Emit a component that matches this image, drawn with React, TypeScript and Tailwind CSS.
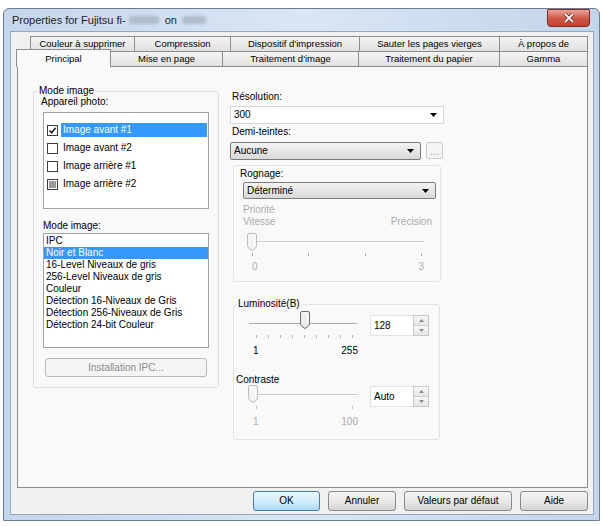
import React from "react";

const rowOne = [
  { label: "Couleur à supprimer", w: "w-[104px]" },
  { label: "Compression", w: "w-[96px]" },
  { label: "Dispositif d'impression", w: "w-[129px]" },
  { label: "Sauter les pages vierges", w: "w-[140px]" },
  { label: "À propos de", w: "w-[89px]" },
];

const rowTwo = [
  { label: "Mise en page", w: "w-[112px]" },
  { label: "Traitement d'image", w: "w-[136px]" },
  { label: "Traitement du papier", w: "w-[141px]" },
  { label: "Gamma", w: "w-[89px]" },
];

const cameras = [
  { label: "Image avant #1", state: "checked", selected: true },
  { label: "Image avant #2", state: "empty", selected: false },
  { label: "Image arrière #1", state: "empty", selected: false },
  { label: "Image arrière #2", state: "gray", selected: false },
];

const modes = [
  "IPC",
  "Noir et Blanc",
  "16-Level Niveaux de gris",
  "256-Level Niveaux de gris",
  "Couleur",
  "Détection 16-Niveaux de Gris",
  "Détection 256-Niveaux de Gris",
  "Détection 24-bit Couleur",
];

function Arrow({ color = "#000" }: { color?: string }) {
  return (
    <svg width="7" height="4" viewBox="0 0 7 4">
      <path d="M0 0H7L3.5 4Z" fill={color} />
    </svg>
  );
}

function Thumb({ disabled = false }: { disabled?: boolean }) {
  return (
    <svg width="10" height="18" viewBox="0 0 10 18">
      <path
        d="M2 0.5H8A1.5 1.5 0 0 1 9.5 2V12.5Q9.5 14 8 15.5L5 17.5L2 15.5Q0.5 14 0.5 12.5V2A1.5 1.5 0 0 1 2 0.5Z"
        fill={disabled ? "#f4f4f4" : "#ededed"}
        stroke={disabled ? "#bcbcbc" : "#6f6f6f"}
      />
      <path d="M2.5 2H7.5V12" fill="none" stroke="#ffffff" />
    </svg>
  );
}

function Checkbox({ state }: { state: string }) {
  return (
    <div className="w-[11px] h-[11px] border border-[#3e3e3e] bg-white flex items-center justify-center shrink-0">
      {state === "checked" && (
        <svg width="9" height="9" viewBox="0 0 9 9">
          <path d="M1.5 4.5L3.7 6.8L7.6 1.8" fill="none" stroke="#222" strokeWidth="1.6" />
        </svg>
      )}
      {state === "gray" && <div className="w-[7px] h-[7px] bg-[#9a9a9a]" />}
    </div>
  );
}

function Ticks({ count, className }: { count: number; className: string }) {
  return (
    <div className={`flex justify-between h-[3px] ${className}`}>
      {Array.from({ length: count }).map((_, i) => (
        <div key={i} className="w-px h-[3px] bg-[#b4b4b4]" />
      ))}
    </div>
  );
}

function Spin({ value }: { value: string }) {
  return (
    <div className="flex h-[21px]">
      <div className="w-[43px] bg-white border border-[#e2e2e2] border-r-0 flex items-center pl-[3px]">
        {value}
      </div>
      <div className="w-[16px] flex flex-col border border-[#c9c9c9]">
        <div className="flex-1 flex items-center justify-center bg-gradient-to-b from-[#f7f7f7] to-[#e6e6e6] border-b border-[#d0d0d0]">
          <svg width="5" height="3" viewBox="0 0 5 3">
            <path d="M0 3H5L2.5 0Z" fill="#8a8a8a" />
          </svg>
        </div>
        <div className="flex-1 flex items-center justify-center bg-gradient-to-b from-[#f7f7f7] to-[#e6e6e6]">
          <svg width="5" height="3" viewBox="0 0 5 3">
            <path d="M0 0H5L2.5 3Z" fill="#8a8a8a" />
          </svg>
        </div>
      </div>
    </div>
  );
}

function Button({ label, w, primary = false }: { label: string; w: string; primary?: boolean }) {
  return (
    <div
      className={`${w} h-[20px] rounded-[3px] border flex items-center justify-center ${
        primary
          ? "border-[#3c7fb1] bg-gradient-to-b from-[#eaf6fd] via-[#d4eefc] to-[#a9daf6]"
          : "border-[#8a8a8a] bg-gradient-to-b from-[#f4f4f4] via-[#e9e9e9] to-[#d3d3d3]"
      }`}
    >
      {label}
    </div>
  );
}

export default function App() {
  return (
    <div className="w-[603px] h-[526px] bg-white overflow-hidden pt-[8px] pl-[3px] font-['Liberation_Sans',Arial,sans-serif] text-[10px] leading-[12px] text-black">
      <div className="w-[597px] h-[513px] rounded-t-[6px] border border-[#6c7e93] bg-gradient-to-r from-[#c4d6ec] via-[#dae6f4] to-[#c2d5eb] flex flex-col">
        {/* title bar */}
        <div className="h-[22px] flex shrink-0">
          <div className="flex items-center pl-[8px] text-[11px] text-[#1e1e1e]">
            <span>Properties for Fujitsu fi-</span>
            <span className="w-[30px] h-[8px] ml-[3px] bg-[#aebccb] rounded-[3px] blur-[1.5px]" />
            <span className="ml-[6px]">on</span>
            <span className="w-[24px] h-[8px] ml-[5px] bg-[#aebccb] rounded-[3px] blur-[1.5px]" />
          </div>
          <div className="ml-auto mr-[9px] w-[43px] h-[18px] rounded-b-[4px] rounded-t-[1px] border border-[#7a2c22] bg-gradient-to-b from-[#e9a597] via-[#cf5b48] to-[#c0412d] flex items-center justify-center">
            <svg width="12" height="10" viewBox="0 0 12 10">
              <path d="M2 1L10 9M10 1L2 9" stroke="#5e1d14" strokeWidth="3.2" />
              <path d="M2 1L10 9M10 1L2 9" stroke="#ffffff" strokeWidth="1.8" />
            </svg>
          </div>
        </div>

        {/* dialog body */}
        <div className="ml-[6px] mr-[5px] mb-[5px] flex-1 bg-[#f0f0f0] border border-[#97a8bc] flex flex-col pl-[6px] pr-[5px] pt-[4px]">
          <div className="ml-[13px] flex h-[15px]">
            {rowOne.map((t, i) => (
              <div
                key={t.label}
                className={`${t.w} border-t border-l ${i === rowOne.length - 1 ? "border-r" : ""} border-[#898c95] bg-gradient-to-b from-[#f4f4f4] to-[#e1e1e1] flex items-center justify-center text-[9.5px] whitespace-nowrap`}
              >
                {t.label}
              </div>
            ))}
          </div>
          <div className="flex h-[15px]">
            <div className="relative z-10 w-[95px] -ml-[1px] -mr-[1px] -mt-[2px] h-[18px] bg-[#f9f9f9] border-t border-l border-r border-[#898c95] flex items-start justify-center pt-[3px] text-[9.5px]">
              Principal
            </div>
            {rowTwo.map((t, i) => (
              <div
                key={t.label}
                className={`${t.w} border-t border-l ${i === rowTwo.length - 1 ? "border-r" : ""} border-[#898c95] bg-gradient-to-b from-[#f4f4f4] to-[#e1e1e1] flex items-center justify-center text-[9.5px] whitespace-nowrap`}
              >
                {t.label}
              </div>
            ))}
          </div>

          {/* tab page */}
          <div className="h-[422px] shrink-0 bg-[#f9f9f9] border border-[#898c95] flex pl-[15px]">
            {/* left column */}
            <div className="mt-[24px] w-[186px]">
              <div className="relative h-[297px] border border-[#d9dfe4] rounded-[3px] flex flex-col">
                <span className="absolute left-[4px] -top-[7px] bg-[#f9f9f9] px-[1px]">Mode image</span>
                <div className="mt-[4px] ml-[7px]">Appareil photo:</div>
                <div className="mt-[4px] ml-[9px] w-[166px] h-[97px] bg-white border border-[#9fa3a8] flex flex-col pt-[8px]">
                  {cameras.map((c) => (
                    <div key={c.label} className="h-[18px] flex items-center pl-[3px] shrink-0">
                      <Checkbox state={c.state} />
                      <div
                        className={`ml-[3px] flex-1 h-[14px] flex items-center pl-[2px] mr-[1px] ${
                          c.selected ? "bg-[#3399ff] text-white" : ""
                        }`}
                      >
                        {c.label}
                      </div>
                    </div>
                  ))}
                </div>
                <div className="mt-[11px] ml-[9px]">Mode image:</div>
                <div className="mt-[1px] ml-[9px] w-[166px] h-[115px] bg-white border border-[#9fa3a8] pt-[1px]">
                  {modes.map((m, i) => (
                    <div
                      key={m}
                      className={`h-[12px] pl-[2px] whitespace-nowrap ${i === 1 ? "bg-[#3399ff] text-white" : ""}`}
                    >
                      {m}
                    </div>
                  ))}
                </div>
                <div className="mt-[10px] ml-[11px] w-[162px] h-[19px] rounded-[3px] border border-[#b5b9bd] bg-[#f4f4f4] flex items-center justify-center text-[#8d8d8d]">
                  Installation IPC...
                </div>
              </div>
            </div>

            {/* right column */}
            <div className="ml-[11px] w-[214px] flex flex-col">
              <div className="mt-[24px] pl-[2px]">Résolution:</div>
              <div className="mt-[3px] h-[18px] bg-white border border-[#d4d6da] flex items-center justify-between pl-[3px] pr-[6px]">
                <span>300</span>
                <Arrow />
              </div>
              <div className="mt-[2px] pl-[2px]">Demi-teintes:</div>
              <div className="mt-[4px] flex">
                <div className="w-[191px] h-[18px] rounded-[2px] border border-[#7b7b7b] bg-gradient-to-b from-[#f3f3f3] to-[#d9d9d9] flex items-center justify-between pl-[3px] pr-[6px]">
                  <span>Aucune</span>
                  <Arrow />
                </div>
                <div className="ml-[5px] w-[17px] h-[17px] rounded-[2px] border border-[#c7c9cc] bg-[#f4f4f4] flex items-end justify-center text-[#9a9a9a] leading-[12px]">
                  ...
                </div>
              </div>

              <div className="mt-[5px] ml-[3px] w-[208px] h-[117px] border border-[#e0e4e8] rounded-[3px] flex flex-col">
                <div className="mt-[2px] ml-[6px]">Rognage:</div>
                <div className="mt-[2px] ml-[9px] w-[193px] h-[17px] rounded-[2px] border border-[#7b7b7b] bg-gradient-to-b from-[#f3f3f3] to-[#d9d9d9] flex items-center justify-between pl-[3px] pr-[6px]">
                  <span>Déterminé</span>
                  <Arrow />
                </div>
                <div className="mt-[5px] ml-[9px] text-[#ababab]">Priorité</div>
                <div className="ml-[9px] mr-[8px] flex justify-between text-[#ababab]">
                  <span>Vitesse</span>
                  <span>Précision</span>
                </div>
                <div className="relative mt-[6px] ml-[16px] w-[174px] h-[15px] flex items-center">
                  <div className="w-full h-[2px] border-t border-[#c9c9c9] border-b border-b-white" />
                  <div className="absolute -left-[3px] -top-[1px]">
                    <Thumb disabled />
                  </div>
                </div>
                <Ticks count={4} className="mt-[4px] ml-[18px] w-[170px]" />
                <div className="mt-[5px] ml-[18px] w-[172px] flex justify-between text-[#ababab]">
                  <span>0</span>
                  <span>3</span>
                </div>
              </div>

              <div className="relative mt-[22px] ml-[3px] w-[207px] h-[136px] border border-[#e0e4e8] rounded-[3px] flex flex-col">
                <span className="absolute left-[3px] -top-[7px] bg-[#f9f9f9] px-[1px]">Luminosité(B)</span>
                <div className="mt-[10px] flex">
                  <div className="relative ml-[15px] w-[108px] h-[18px] flex items-center">
                    <div className="w-full h-[2px] border-t border-[#a8a8a8] border-b border-b-white" />
                    <div className="absolute left-[51px] -top-[4px]">
                      <Thumb />
                    </div>
                  </div>
                  <div className="ml-[13px]">
                    <Spin value="128" />
                  </div>
                </div>
                <Ticks count={9} className="-mt-[1px] ml-[22px] w-[97px]" />
                <div className="mt-[7px] ml-[19px] w-[105px] flex justify-between">
                  <span>1</span>
                  <span>255</span>
                </div>
                <div className="mt-[17px] ml-[2px]">Contraste</div>
                <div className="flex">
                  <div className="relative ml-[15px] w-[108px] h-[18px] flex items-center">
                    <div className="w-full h-[2px] border-t border-[#c9c9c9] border-b border-b-white" />
                    <div className="absolute -left-[1px] -top-[1px]">
                      <Thumb disabled />
                    </div>
                  </div>
                  <div className="ml-[13px]">
                    <Spin value="Auto" />
                  </div>
                </div>
                <div className="-mt-[1px] ml-[22px] w-[97px] flex justify-between">
                  <div className="w-px h-[3px] bg-[#c4c4c4]" />
                  <div className="w-px h-[3px] bg-[#c4c4c4]" />
                </div>
                <div className="mt-[7px] ml-[19px] w-[105px] flex justify-between text-[#ababab]">
                  <span>1</span>
                  <span>100</span>
                </div>
              </div>
            </div>
          </div>

          {/* buttons */}
          <div className="mt-[3px] flex justify-end gap-[8px]">
            <Button label="OK" w="w-[67px]" primary />
            <Button label="Annuler" w="w-[68px]" />
            <Button label="Valeurs par défaut" w="w-[108px]" />
            <Button label="Aide" w="w-[68px]" />
          </div>
        </div>
      </div>
    </div>
  );
}
